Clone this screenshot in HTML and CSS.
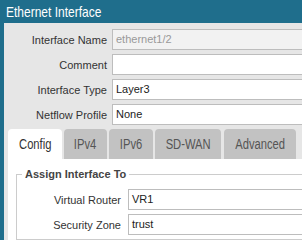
FILE: index.html
```html
<!DOCTYPE html>
<html lang="en">
<head>
    <meta charset="UTF-8">
    <meta name="viewport" content="width=device-width, initial-scale=1.0">
    <title>Ethernet Interface</title>
    <link rel="stylesheet" href="styles.css">
</head>
<body>
    <div class="dialog">
        <div class="titlebar"><span class="narrow">Ethernet Interface</span></div>

        <div class="form">
            <div class="row">
                <label>Interface Name</label>
                <div class="field disabled">ethernet1/2</div>
            </div>
            <div class="row">
                <label>Comment</label>
                <div class="field"></div>
            </div>
            <div class="row">
                <label>Interface Type</label>
                <div class="field">Layer3</div>
            </div>
            <div class="row">
                <label>Netflow Profile</label>
                <div class="field">None</div>
            </div>
        </div>

        <div class="tabs">
            <div class="tab active tab-config"><span class="narrow">Config</span></div>
            <div class="tab tab-ipv4"><span class="narrow">IPv4</span></div>
            <div class="tab tab-ipv6"><span class="narrow">IPv6</span></div>
            <div class="tab tab-sdwan"><span class="narrow">SD-WAN</span></div>
            <div class="tab tab-advanced"><span class="narrow">Advanced</span></div>
        </div>

        <div class="panel">
            <fieldset class="group">
                <legend>Assign Interface To</legend>
                <div class="row">
                    <label>Virtual Router</label>
                    <div class="field">VR1</div>
                </div>
                <div class="row">
                    <label>Security Zone</label>
                    <div class="field">trust</div>
                </div>
            </fieldset>
        </div>
    </div>
</body>
</html>
```

FILE: styles.css
```css
body {
    margin: 0;
    font-family: "Liberation Sans", Arial, sans-serif;
    width: 302px;
    height: 240px;
    overflow: hidden;
}
.dialog {
    height: 240px;
    box-sizing: border-box;
    background-color: #e6e6e6;
    border-left: 4px solid #1f6e8c;
}
/* no condensed font installed, so squeeze the glyphs */
.narrow {
    display: inline-block;
    white-space: nowrap;
    transform: scaleX(0.8);
}
.titlebar {
    height: 23px;
    line-height: 23px;
    margin-left: -4px;
    padding-left: 6px;
    background-color: #1f6e8c;
    color: #fff;
    font-size: 15px;
}
.titlebar .narrow {
    transform-origin: left center;
}
.form {
    display: flex;
    flex-direction: column;
    gap: 4px;
    padding-top: 6px;
}
.row {
    display: flex;
    align-items: center;
    height: 21px;
}
.row label {
    flex: 0 0 103px;
    margin-right: 5px;
    text-align: right;
    font-size: 11px;
    color: #333;
}
.field {
    flex: 1;
    height: 21px;
    box-sizing: border-box;
    border: 1px solid #bdbdbd;
    border-right: none;
    background-color: #fff;
    padding-left: 3px;
    line-height: 19px;
    font-size: 11px;
    color: #222;
}
.field.disabled {
    background-color: #f2f2f2;
    color: #999;
}
.tabs {
    display: flex;
    gap: 2px;
    margin-top: 4px;
    padding-left: 4px;
}
.tab {
    height: 30px;
    line-height: 30px;
    text-align: center;
    background-color: #c2c2c2;
    border-radius: 4px 4px 0 0;
    color: #555;
    font-size: 14px;
}
.tab.active {
    background-color: #fff;
    color: #333;
}
.tab-config { width: 54px; }
.tab-ipv4 { width: 43px; }
.tab-ipv6 { width: 44px; }
.tab-sdwan { width: 66px; }
.tab-advanced { width: 72px; margin-left: 1px; }
.panel {
    margin-left: 4px;
    padding-left: 8px;
    height: 81px;
    overflow: hidden;
    background-color: #fff;
}
.group {
    margin: 9px 0 0 0;
    padding: 8px 0 0 5px;
    border: 1px solid #ccc;
    border-right: none;
}
.group legend {
    padding: 0 3px;
    line-height: 13px;
    font-size: 11px;
    font-weight: bold;
    color: #444;
}
.group .row {
    margin-bottom: 4px;
}
.group .row label {
    flex: 0 0 99px;
    margin-right: 7px;
}
```
